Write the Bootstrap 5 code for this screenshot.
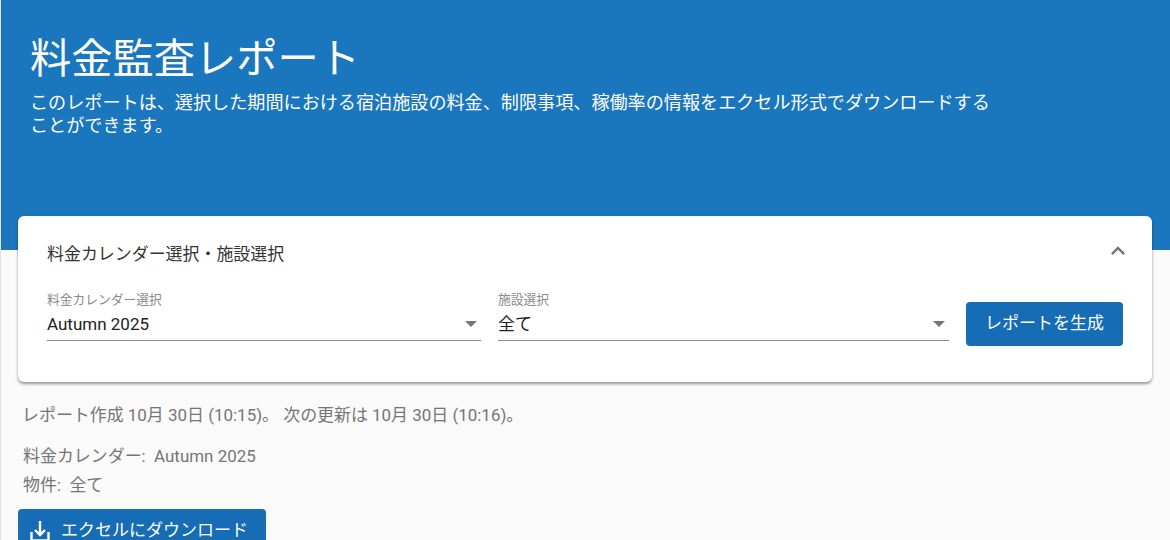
<!DOCTYPE html>
<html lang="ja">
<head>
<meta charset="utf-8">
<title>料金監査レポート</title>
<link href="https://cdn.jsdelivr.net/npm/bootstrap@5.3.0/dist/css/bootstrap.min.css" rel="stylesheet">
<style>
html,body{height:540px;overflow:hidden}
body{background:#fafafa;font-family:Roboto,"Noto Sans CJK JP",sans-serif;color:#212121;border-left:1px solid #e6dfe3}
.hero-band{background:#1a76bd;height:250px;padding:34px 30px 0 29px;color:#fff}
.hero-title{font-size:41.25px;font-weight:400;line-height:50px;margin:0 0 7px;letter-spacing:0}
.hero-sub{font-size:18.13px;font-weight:400;line-height:23px;width:970px;margin:0}
.main-area{padding:0 18px 0 17px;margin-top:-34px}
.panel-card{background:#fff;border-radius:6px;box-shadow:0 2px 3px rgba(0,0,0,.4);height:166px;padding:0 28px 0 29px}
.panel-head{height:76px;padding-top:2px;font-size:16.95px;color:#333}
.chev{margin-right:-8px;margin-bottom:8px}
.panel-fields{gap:17px}
.field-box{border-bottom:1px solid #8c8c8c;height:49px;position:relative}
.field-cal{width:434px}
.field-prop{width:451px}
.field-label{font-size:12.75px;color:#8a8a8a;line-height:16px;display:block}
.field-value{font-size:17px;line-height:24px;color:#212121;padding-top:4px;display:block}
.caret-down{width:0;height:0;border-left:6px solid transparent;border-right:6px solid transparent;border-top:6px solid #757575;margin-right:4px;position:absolute;right:0;top:29px}
.btn-generate{background:#166cb5;color:#fff;border:0;border-radius:4px;width:157px;height:44px;font-size:17px;font-weight:400;padding:0;margin-top:10px}
.meta-area{padding:0 4px 0 5px;color:#757575;font-size:16.95px;font-weight:400}
.meta-status{line-height:24px;margin:21px 0 17px;margin-left:-1px}
.meta-line{line-height:24px;margin:0 0 5px}
.btn-excel{background:#166cb5;color:#fff;border:0;border-radius:4px;width:248px;height:44px;font-size:17px;font-weight:400;margin:12px 0 0 -5px;padding:0 0 0 10px;gap:9px}
</style>
</head>
<body>
<header class="hero-band">
<h1 class="hero-title">料金監査レポート</h1>
<p class="hero-sub">このレポートは、選択した期間における宿泊施設の料金、制限事項、稼働率の情報をエクセル形式でダウンロードすることができます。</p>
</header>
<main class="main-area">
<section class="panel-card">
<div class="panel-head d-flex align-items-center justify-content-between">
<span>料金カレンダー選択・施設選択</span>
<svg class="chev" width="28" height="28" viewBox="0 0 24 24" fill="#757575"><path d="M12 8l-6 6 1.41 1.41L12 10.83l4.59 4.58L18 14z"/></svg>
</div>
<div class="panel-fields d-flex align-items-start">
<div class="field-box field-cal"><span class="field-label">料金カレンダー選択</span><span class="field-value">Autumn 2025</span><span class="caret-down"></span></div>
<div class="field-box field-prop"><span class="field-label">施設選択</span><span class="field-value">全て</span><span class="caret-down"></span></div>
<button type="button" class="btn btn-generate">レポートを生成</button>
</div>
</section>
<section class="meta-area">
<p class="meta-status">レポート作成 10月 30日 (10:15)。 次の更新は 10月 30日 (10:16)。</p>
<p class="meta-line">料金カレンダー:&nbsp; Autumn 2025</p>
<p class="meta-line">物件:&nbsp; 全て</p>
<button type="button" class="btn btn-excel d-flex align-items-center">
<svg width="24" height="24" viewBox="0 0 24 24" fill="none" stroke="#fff" stroke-width="2.4"><path d="M12 2v14M7 11l5 5 5-5"/><path d="M3.5 13v8.5h17V13"/></svg>
<span>エクセルにダウンロード</span>
</button>
</section>
</main>
<script src="https://cdn.jsdelivr.net/npm/bootstrap@5.3.0/dist/js/bootstrap.bundle.min.js"></script>
</body>
</html>
